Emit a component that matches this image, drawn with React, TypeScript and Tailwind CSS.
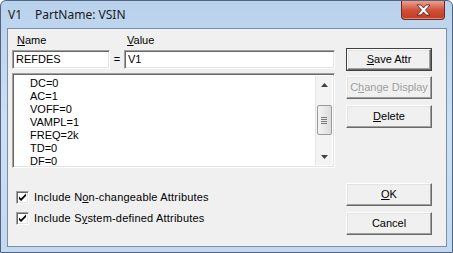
import type { ReactNode } from 'react';

const attrs = ['DC=0', 'AC=1', 'VOFF=0', 'VAMPL=1', 'FREQ=2k', 'TD=0', 'DF=0'];

function Btn({ children, def, disabled }: { children: ReactNode; def?: boolean; disabled?: boolean }) {
  return (
    <div
      className={`h-[23px] w-[86px] flex items-center justify-center bg-[#f0f0f0] ${
        def ? 'border border-[#404040]' : ''
      }`}
    >
      <div
        className={`w-full h-full flex items-center justify-center border border-t-white border-l-white border-b-[#696969] border-r-[#696969] shadow-[inset_-1px_-1px_#a0a0a0,inset_1px_1px_#e3e3e3] ${
          disabled ? 'text-[#a0a0a0]' : 'text-black'
        }`}
      >
        {children}
      </div>
    </div>
  );
}

function Sunken({ className, children }: { className: string; children?: ReactNode }) {
  return (
    <div
      className={`bg-white border border-t-[#a0a0a0] border-l-[#a0a0a0] border-b-white border-r-white shadow-[inset_1px_1px_#696969,inset_-1px_-1px_#e3e3e3] ${className}`}
    >
      {children}
    </div>
  );
}

function Check({ children }: { children: ReactNode }) {
  return (
    <div className="flex items-center h-[13px]">
      <div className="ml-[4px] w-[13px] h-[13px] bg-white border border-t-[#a0a0a0] border-l-[#a0a0a0] border-b-white border-r-white shadow-[inset_1px_1px_#696969,inset_-1px_-1px_#e3e3e3] flex items-center justify-center">
        <svg width="9" height="9" viewBox="0 0 9 9">
          <path d="M1 3.5 L3 5.5 L8 0.5 L8 3 L3 8 L1 6 Z" fill="#000" />
        </svg>
      </div>
      <span className="ml-[5px] tracking-[0.2px]">{children}</span>
    </div>
  );
}

export default function App() {
  return (
    <div
      className="w-[453px] h-[253px] relative overflow-hidden rounded-t-[6px] border border-[#4e6482] bg-gradient-to-b from-[#b9d2ec] via-[#cde0f3] to-[#c3d9ef]"
      style={{ fontFamily: '"Liberation Sans", Arial, sans-serif' }}
    >
      {/* title bar */}
      <div className="h-[27px] flex items-start justify-between">
        <div
          className="pl-[7px] pt-[6px] text-[12px] text-[#1a1a1a] leading-[16px]"
          style={{ fontFamily: '"Noto Sans", "Open Sans", sans-serif' }}
        >
          <span>V1</span>
          <span className="ml-[13px]">PartName: VSIN</span>
        </div>
        <div className="mr-[7px] w-[44px] h-[19px] rounded-b-[4px] border border-t-0 border-[#6e2a1f] bg-gradient-to-b from-[#eba08c] via-[#cf513b] to-[#c23a22] flex items-center justify-center shadow-[inset_0_-1px_#e58b73]">
          <svg width="15" height="12" viewBox="0 0 15 12">
            <path
              d="M1 1 H5 L7.5 4 L10 1 H14 L9.5 6 L14 11 H10 L7.5 8 L5 11 H1 L5.5 6 Z"
              fill="#fff"
              stroke="#4b1a12"
              strokeWidth="0.8"
              strokeLinejoin="round"
            />
          </svg>
        </div>
      </div>

      {/* client area */}
      <div className="ml-[6px] w-[440px] h-[219px] border border-[#7d8ea4] bg-[#f0f0f0] text-[11px] text-black leading-[13px] flex">
        {/* left column */}
        <div className="ml-[4px] w-[323px] pt-[5px] flex flex-col">
          <div className="h-[13px] flex">
            <span className="ml-[5px] w-[110px]">
              <span className="underline">N</span>ame
            </span>
            <span>
              <span className="underline">V</span>alue
            </span>
          </div>
          <div className="mt-[3px] h-[19px] flex items-center">
            <Sunken className="w-[98px] h-[19px] flex items-center pl-[3px]">REFDES</Sunken>
            <span className="w-[14px] text-center">=</span>
            <Sunken className="w-[211px] h-[19px] flex items-center pl-[3px]">V1</Sunken>
          </div>
          <Sunken className="mt-[4px] h-[95px] flex p-[2px]">
            <div className="flex-1 pt-[1px] pl-[15px]">
              {attrs.map((a) => (
                <div key={a} className="h-[13px]">
                  {a}
                </div>
              ))}
            </div>
            {/* scrollbar */}
            <div className="w-[17px] h-full bg-[#f3f3f3] border-l border-[#e6e6e6] flex flex-col items-center">
              <div className="h-[17px] flex items-center justify-center">
                <svg width="7" height="4" viewBox="0 0 7 4">
                  <path d="M0 4 L3.5 0 L7 4 Z" fill="#404040" />
                </svg>
              </div>
              <div className="mt-[12px] w-[15px] h-[30px] rounded-[2px] border border-[#9a9a9a] bg-gradient-to-r from-[#f4f4f4] to-[#dcdcdc] flex flex-col items-center justify-center gap-[1px]">
                <div className="w-[6px] h-px bg-[#7a7a7a]" />
                <div className="w-[6px] h-px bg-[#7a7a7a]" />
                <div className="w-[6px] h-px bg-[#7a7a7a]" />
                <div className="w-[6px] h-px bg-[#7a7a7a]" />
              </div>
              <div className="flex-1" />
              <div className="h-[17px] flex items-center justify-center">
                <svg width="7" height="4" viewBox="0 0 7 4">
                  <path d="M0 0 L7 0 L3.5 4 Z" fill="#404040" />
                </svg>
              </div>
            </div>
          </Sunken>
          <div className="mt-[23px] flex flex-col gap-[8px]">
            <Check>
              Include N<span className="underline">o</span>n-changeable Attributes
            </Check>
            <Check>
              Include S<span className="underline">y</span>stem-defined Attributes
            </Check>
          </div>
        </div>

        {/* right column */}
        <div className="ml-[11px] pt-[19px] flex flex-col">
          <Btn def>
            <span>
              <span className="underline">S</span>ave Attr
            </span>
          </Btn>
          <div className="mt-[5px]">
            <Btn disabled>
              <span>
                C<span className="underline">h</span>ange Display
              </span>
            </Btn>
          </div>
          <div className="mt-[6px]">
            <Btn>
              <span>
                <span className="underline">D</span>elete
              </span>
            </Btn>
          </div>
          <div className="mt-[55px]">
            <Btn>
              <span>
                <span className="underline">O</span>K
              </span>
            </Btn>
          </div>
          <div className="mt-[6px]">
            <Btn>Cancel</Btn>
          </div>
        </div>
      </div>
    </div>
  );
}
